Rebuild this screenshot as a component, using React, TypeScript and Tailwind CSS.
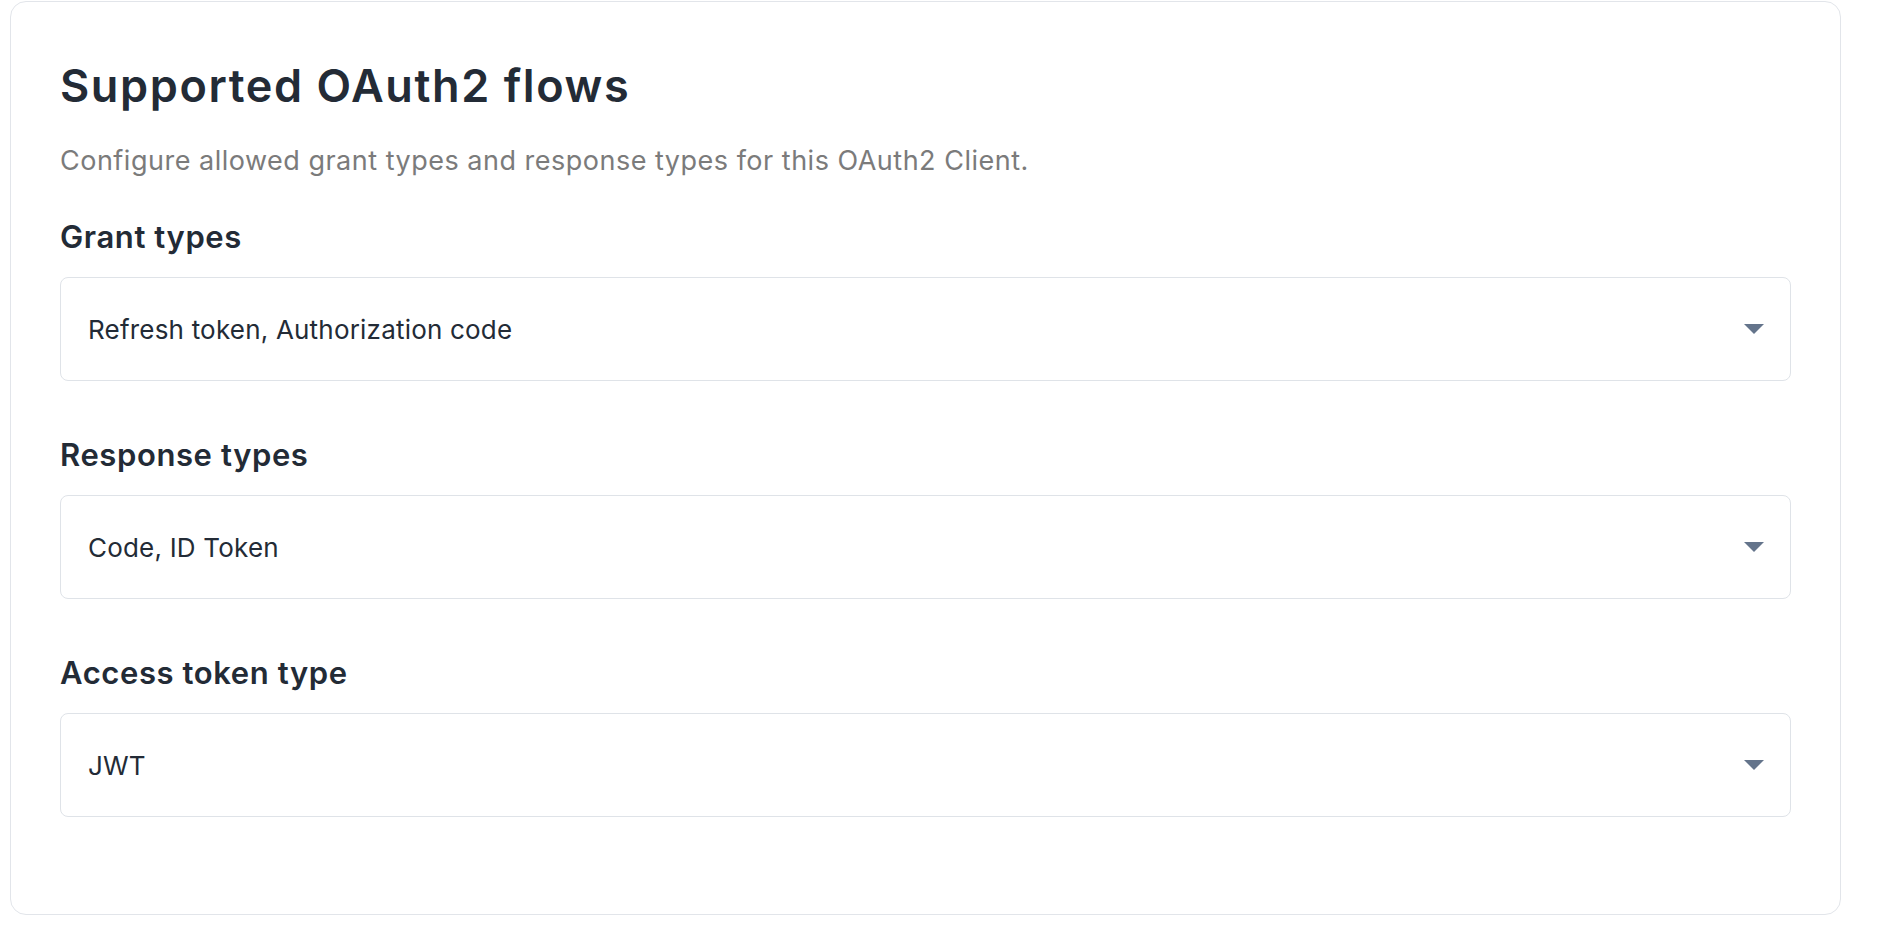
import React from 'react';

const fields = [
  { label: 'Grant types', value: 'Refresh token, Authorization code' },
  { label: 'Response types', value: 'Code, ID Token' },
  { label: 'Access token type', value: 'JWT' },
];

const Caret = () => (
  <svg width="20" height="10" viewBox="0 0 20 10" className="text-[#64748b]">
    <path d="M0 0 H20 L10 10 Z" fill="currentColor" />
  </svg>
);

const SelectField: React.FC<{ label: string; value: string; first?: boolean }> = ({ label, value, first }) => (
  <div className={first ? 'mt-[41px]' : 'mt-[55px]'}>
    <label className="block pt-px text-[31px] leading-[36px] tracking-[0.6px] font-semibold text-[#232b36]">{label}</label>
    <div className="mt-[22px] h-[104px] flex items-center justify-between rounded-lg border border-[#dfe3e8] bg-white pl-[27px] pr-[26px]">
      <span className="text-[26px] tracking-[0.2px] text-[#232b36]">{value}</span>
      <Caret />
    </div>
  </div>
);

export default function App() {
  return (
    <div className="min-h-screen bg-white pt-px" style={{ fontFamily: 'Inter, "Noto Sans", sans-serif' }}>
      <div className="ml-[10px] w-[1831px] rounded-2xl border border-[#e2e5ea] bg-white px-[49px] pt-[60px] pb-[97px]">
        <h2 className="text-[45px] leading-[48px] tracking-[1.6px] font-semibold text-[#232b36]">Supported OAuth2 flows</h2>
        <p className="mt-[35px] text-[27px] leading-[32px] tracking-[0.5px] text-[#7b7b7b]">
          Configure allowed grant types and response types for this OAuth2 Client.
        </p>
        {fields.map((f, i) => (
          <SelectField key={f.label} label={f.label} value={f.value} first={i === 0} />
        ))}
      </div>
    </div>
  );
}
